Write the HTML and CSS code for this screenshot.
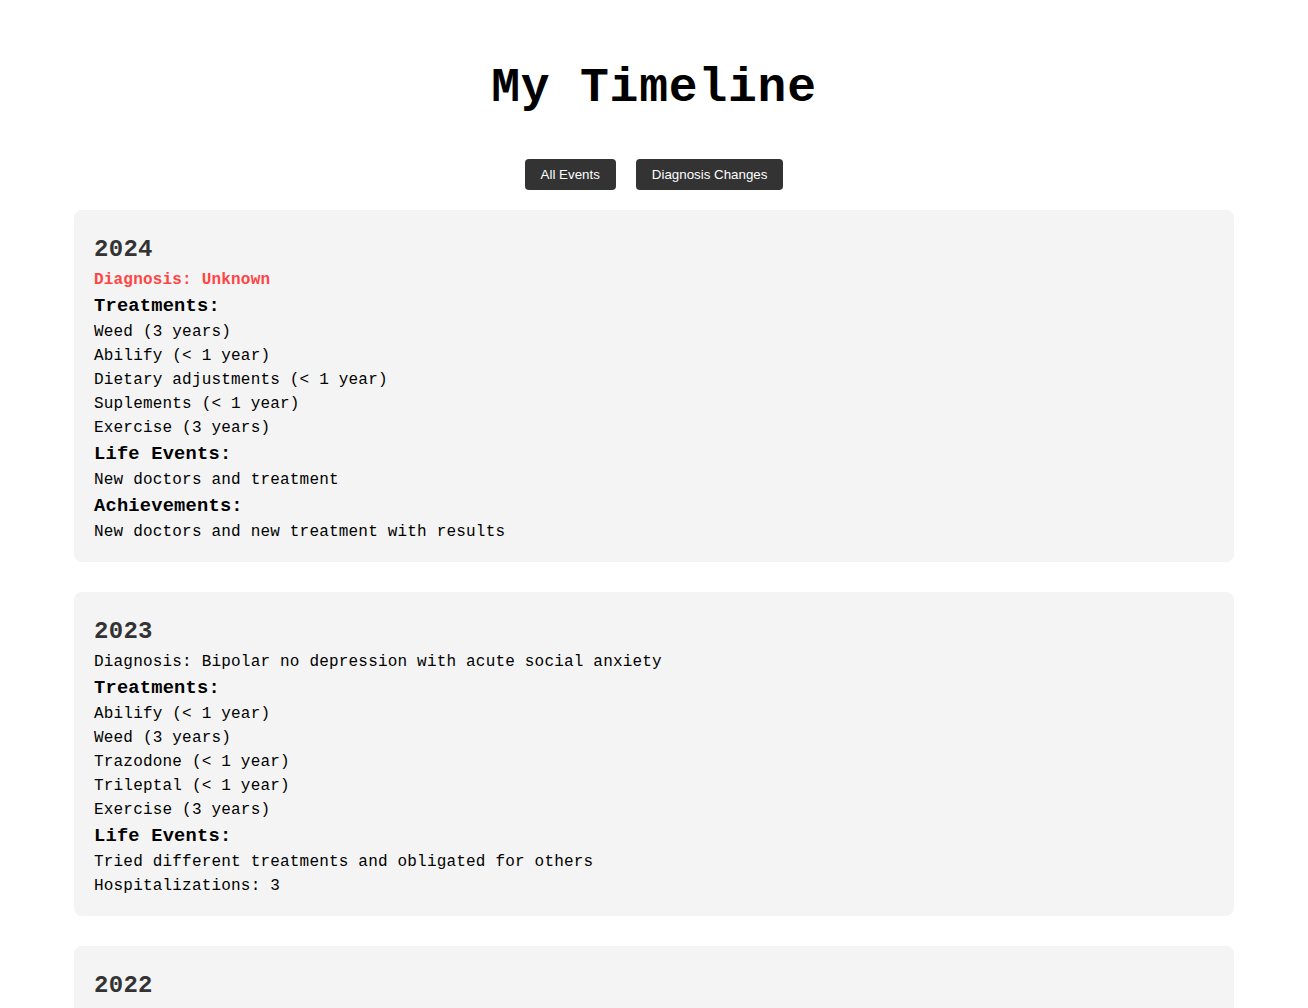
FILE: index.html
```html
<!DOCTYPE html>
<html lang="en">
<head>
<meta charset="utf-8">
<title>My Timeline</title>
<link rel="stylesheet" href="styles.css">
</head>
<body>
<main class="page">
  <h1 class="title">My Timeline</h1>
  <div class="filters">
    <button class="filter-btn">All Events</button>
    <button class="filter-btn">Diagnosis Changes</button>
  </div>
  <div class="timeline">
    <section class="card">
      <h2 class="year">2024</h2>
      <p class="diagnosis diagnosis-unknown">Diagnosis: Unknown</p>
      <h3 class="section-title">Treatments:</h3>
      <p>Weed (3 years)</p>
      <p>Abilify (&lt; 1 year)</p>
      <p>Dietary adjustments (&lt; 1 year)</p>
      <p>Suplements (&lt; 1 year)</p>
      <p>Exercise (3 years)</p>
      <h3 class="section-title">Life Events:</h3>
      <p>New doctors and treatment</p>
      <h3 class="section-title">Achievements:</h3>
      <p>New doctors and new treatment with results</p>
    </section>
    <section class="card">
      <h2 class="year">2023</h2>
      <p class="diagnosis">Diagnosis: Bipolar no depression with acute social anxiety</p>
      <h3 class="section-title">Treatments:</h3>
      <p>Abilify (&lt; 1 year)</p>
      <p>Weed (3 years)</p>
      <p>Trazodone (&lt; 1 year)</p>
      <p>Trileptal (&lt; 1 year)</p>
      <p>Exercise (3 years)</p>
      <h3 class="section-title">Life Events:</h3>
      <p>Tried different treatments and obligated for others</p>
      <p>Hospitalizations: 3</p>
    </section>
    <section class="card">
      <h2 class="year">2022</h2>
      <p class="diagnosis">Diagnosis: Bipolar with depression</p>
      <h3 class="section-title">Treatments:</h3>
      <p>Weed (2 years)</p>
      <p>Exercise (2 years)</p>
    </section>
  </div>
</main>
</body>
</html>
```

FILE: styles.css
```css
* {
  box-sizing: border-box;
}

html, body {
  margin: 0;
  padding: 0;
  background: #ffffff;
}

body {
  font-family: "Liberation Mono", "DejaVu Sans Mono", monospace;
  font-size: 16px;
  line-height: 1.5;
  color: #000;
  letter-spacing: 0.19px;
}

.page {
  padding-top: 52px;
}

.title {
  margin: 0 0 35px;
  font-size: 48px;
  line-height: 72px;
  font-weight: 700;
  text-align: center;
  letter-spacing: 0.8px;
  color: #000;
}

.filters {
  display: flex;
  justify-content: center;
  gap: 20px;
  margin-bottom: 20px;
}

.filter-btn {
  font-family: "Liberation Sans", Arial, sans-serif;
  font-size: 13.33px;
  line-height: 15px;
  letter-spacing: 0;
  padding: 8px 16px;
  background: #333;
  color: #fff;
  border: none;
  border-radius: 4px;
}

.timeline {
  width: 1160px;
  margin: 0 auto;
  display: flex;
  flex-direction: column;
  gap: 30px;
}

.card {
  background: #f4f4f4;
  border-radius: 8px;
  padding: 22px 20px 18px;
}

.card p {
  margin: 0;
}

.year {
  margin: 0;
  font-size: 24px;
  line-height: 36px;
  font-weight: 700;
  color: #333;
  letter-spacing: 0.3px;
}

.diagnosis-unknown {
  color: #ff4444;
  font-weight: 700;
}

.section-title {
  margin: 0;
  font-size: 18.72px;
  line-height: 28px;
  font-weight: 700;
  letter-spacing: 0.22px;
}
```
